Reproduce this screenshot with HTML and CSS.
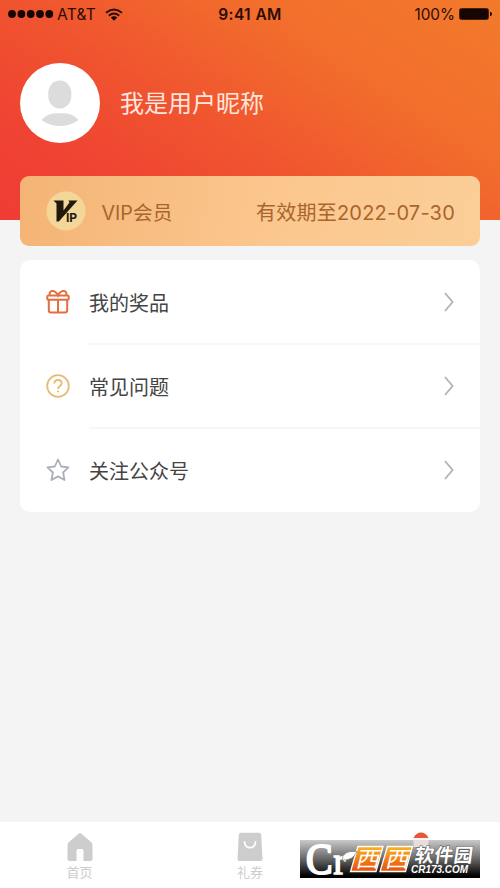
FILE: index.html
```html
<!DOCTYPE html>
<html lang="zh-CN">
<head>
<meta charset="utf-8">
<meta name="viewport" content="width=device-width, initial-scale=1">
<title>我的</title>
<link rel="stylesheet" href="styles.css">
</head>
<body>
<div class="screen">
  <header class="hero">
    <div class="status">
      <div class="status-left">
        <svg width="46" height="10" viewBox="0 0 46 10"><circle cx="4" cy="5" r="3.9"/><circle cx="13.4" cy="5" r="3.9"/><circle cx="22.7" cy="5" r="3.9"/><circle cx="32" cy="5" r="3.9"/><circle cx="41.3" cy="5" r="3.9"/></svg>
        <span class="carrier">AT&amp;T</span>
        <svg class="wifi" width="18" height="13" viewBox="0 0 18 13"><g fill="none" stroke="#2a0c05" stroke-width="2"><path d="M1 4.8Q9-1.8 17 4.8"/><path d="M3.8 7.7Q9 3.4 14.2 7.7"/></g><path d="M5.8 9.5Q9 6.9 12.2 9.5L9 12.7Z"/></svg>
      </div>
      <span class="time">9:41 AM</span>
      <div class="status-right">
        <span class="percent">100%</span>
        <svg width="33" height="12" viewBox="0 0 33 12"><rect x=".5" y=".5" width="29" height="11" rx="1.8" fill="none" stroke="#47200b"/><rect x="1" y="1" width="28" height="10" rx=".8"/><path d="M31 3.8q2 .4 2 2.2t-2 2.2z"/></svg>
      </div>
    </div>
    <div class="profile">
      <svg class="avatar" width="80" height="80" viewBox="0 0 80 80"><circle cx="40" cy="40" r="40" fill="#fff"/><rect x="28.3" y="17.5" width="23" height="28" rx="11" ry="12.5" fill="#dcdcdc"/><path d="M21.5 57Q27 50.5 36 50.2H44Q53 50.5 58.5 57Q50 63 40 63T21.5 57Z" fill="#dcdcdc"/></svg>
      <h1 class="nickname">我是用户昵称</h1>
    </div>
  </header>

  <main>
    <section class="vip">
      <svg class="vip-badge" width="40" height="40" viewBox="0 0 40 40"><circle cx="20" cy="20" r="19.5" fill="#f4d699"/><path d="M7.5 9.5H17.5V19.5L23.5 11.5 22.5 9.5H31.5L12.8 30.5H10.5V12.5Z" fill="#21190c"/><text class="vip-ip" x="20" y="30.8">IP</text></svg>
      <span class="vip-name">VIP会员</span>
      <span class="vip-date">有效期至2022-07-30</span>
    </section>

    <nav class="menu">
      <a class="item">
        <svg class="icon" width="24" height="24" viewBox="0 0 24 24" fill="none" stroke="#e36f3f" stroke-width="2"><rect x="1.3" y="5.5" width="21.4" height="4.2" rx="1"/><path d="M2.8 10V20.5Q2.8 22.5 5 22.5H19Q21.2 22.5 21.2 20.5V10M12 10V22.5M4 5.5C2 0 9-1 12 5.5C15-1 22 0 20 5.5"/></svg>
        <span class="label">我的奖品</span>
        <svg class="chevron" width="10" height="20" viewBox="0 0 10 20"><path d="M1 1L8.5 10 1 19"/></svg>
      </a>
      <a class="item">
        <svg class="icon" width="24" height="24" viewBox="0 0 24 24" fill="none" stroke="#e6bb76" stroke-width="1.8"><circle cx="12" cy="12" r="10.8"/><path d="M8.3 9.6C8.3 4.7 15.7 4.9 15.7 9.4C15.7 12 12 12 12 15"/><path d="M12 16.5v1.8"/></svg>
        <span class="label">常见问题</span>
        <svg class="chevron" width="10" height="20" viewBox="0 0 10 20"><path d="M1 1L8.5 10 1 19"/></svg>
      </a>
      <a class="item">
        <svg class="icon" width="24" height="24" viewBox="0 0 24 24" fill="none" stroke="#a9b0bd" stroke-width="1.8" stroke-linejoin="round"><path d="M12 1.5L15.2 8.5 22.5 9.3 17.1 14.5 18.5 22 12 18.4 5.5 22 6.9 14.5 1.5 9.3 8.8 8.5Z"/></svg>
        <span class="label">关注公众号</span>
        <svg class="chevron" width="10" height="20" viewBox="0 0 10 20"><path d="M1 1L8.5 10 1 19"/></svg>
      </a>
    </nav>
  </main>

  <footer class="tabs">
    <a class="tab">
      <svg width="26" height="30" viewBox="0 0 26 30"><path d="M11.5 1.7Q13 .5 14.5 1.7L24.5 10.5Q25.5 11.5 25.5 13V27Q25.5 29 23.5 29H16.5V19Q16.5 17 14.5 17H11.5Q9.5 17 9.5 19V29H2.5Q.5 29 .5 27V13Q.5 11.5 1.5 10.5Z" fill="#cdcdcd"/></svg>
      <span>首页</span>
    </a>
    <a class="tab">
      <svg width="26" height="30" viewBox="0 0 26 30"><path d="M4 .8H22Q24 .8 24.2 3L25.5 27Q25.5 29 23.5 29H2.5Q.5 29 .5 27L1.8 3Q2 .8 4 .8Z" fill="#cdcdcd"/><path d="M7.5 10C8 17.5 18 17.5 18.5 10" fill="none" stroke="#fff" stroke-width="1.8" stroke-linecap="round"/></svg>
      <span>礼券</span>
    </a>
    <a class="tab">
      <svg width="26" height="30" viewBox="0 0 26 30"><path d="M5.5 6Q8 .5 13 .5T20.5 6Z" fill="#e5583a"/><path d="M5.5 6H20.5V16H5.5Z" fill="#fbf3f1"/></svg>
    </a>
  </footer>

  <svg class="watermark" width="180" height="38" viewBox="0 0 180 38">
    <defs>
      <linearGradient id="bar" x1="0" y1="0" x2="0" y2="1"><stop offset="0" stop-color="#c9c9c9"/><stop offset=".5" stop-color="#666"/><stop offset=".95" stop-color="#000"/></linearGradient>
      <linearGradient id="orange" x1="0" y1="0" x2="0" y2="1"><stop offset="0" stop-color="#fbb31f"/><stop offset="1" stop-color="#e84e0c"/></linearGradient>
    </defs>
    <rect width="180" height="38" fill="url(#bar)"/>
    <rect x="113.5" width="15" height="7" fill="#e6dedc"/>
    <text class="mark-c" transform="translate(6 33.500) scale(.95 1.080)">C</text>
    <text class="mark-r" transform="translate(33.500 33.500) scale(1 1.050)">r</text>
    <g stroke="#fff" stroke-width="1.300" fill="url(#orange)"><path d="M58 6.500H83L76 31.500H50.500Z"/><path d="M87.500 6.500H112.500L105.500 31.500H80Z"/></g>
    <text class="mark-xi" transform="translate(55 26.500) skewX(-14) scale(1.100 1)">西</text>
    <text class="mark-xi" transform="translate(84.500 26.500) skewX(-14) scale(1.100 1)">西</text>
    <path d="M42 21Q42 10 57 11.500Q53 20.500 43 20Z" fill="#fff" stroke="#555" stroke-width=".5"/>
    <text class="mark-cn" transform="translate(114 21.500) skewX(-8)" textLength="58">软件园</text>
    <text class="mark-url" x="111" y="33" textLength="57" lengthAdjust="spacingAndGlyphs">CR173.COM</text>
  </svg>
</div>
</body>
</html>
```
FILE: styles.css
```css
* { box-sizing: border-box; }
body {
  margin: 0;
  background: #f4f4f4;
  font-family: Inter, "Noto Sans CJK SC", sans-serif;
}
svg { display: block; flex: none; }
.screen {
  position: relative;
  width: 500px;
  height: 888px;
  display: flex;
  flex-direction: column;
  overflow: hidden;
}
.hero {
  height: 220px;
  background: linear-gradient(33deg, #ef3d35 0%, #ef4133 16%, #f0542f 42%, #f26e2c 70%, #f27a2b 100%);
}
.status {
  height: 28px;
  padding: 0 8px;
  display: grid;
  grid-template-columns: 1fr auto 1fr;
  align-items: center;
  color: #2a0c05;
  font-size: 15.5px;
}
.status svg { fill: #160502; }
.status-left, .status-right { display: flex; align-items: center; }
.status-right { justify-content: flex-end; gap: 4px; }
.carrier { margin-left: 3px; letter-spacing: 0.3px; }
.wifi { margin-left: 9px; }
.time { font-weight: 600; letter-spacing: 0.4px; }
.percent { font-size: 15.3px; }
.profile {
  display: flex;
  align-items: center;
  gap: 20px;
  padding: 35px 20px 0;
}
.nickname {
  margin: 2px 0 0;
  color: #ffe5dd;
  font-size: 24px;
  font-weight: 400;
  line-height: 36px;
}
main { flex: 1; padding: 0 20px; }
.vip {
  height: 70px;
  margin-top: -44px;
  padding: 0 25px 0 26px;
  display: flex;
  align-items: center;
  border-radius: 9px;
  background: linear-gradient(100deg, #f4b475, #fbc78e 55%, #fbce98);
  color: #a9652c;
  font-size: 19.7px;
}
.vip-ip { font: 700 12px Inter, sans-serif; fill: #21190c; }
.vip-name { margin-left: 15.5px; }
.vip-date { margin-left: auto; font-size: 20px; letter-spacing: 0.22px; }
.menu {
  margin-top: 14px;
  height: 252px;
  background: #fff;
  border-radius: 10px;
}
.item {
  position: relative;
  height: 84px;
  padding: 0 26px;
  display: flex;
  align-items: center;
}
.item + .item::before {
  content: "";
  position: absolute;
  top: -1px;
  left: 69px;
  right: 0;
  height: 2px;
  background: #f7f7f7;
}
.label { margin-left: 19px; flex: 1; font-size: 20px; color: #444; }
.chevron { fill: none; stroke: #b5b5b5; stroke-width: 1.9; }
.tabs {
  height: 66px;
  padding: 10px 0 0;
  display: flex;
  justify-content: space-between;
  background: #fff;
}
.tab {
  width: 159px;
  display: flex;
  flex-direction: column;
  align-items: center;
  color: #cdcdcd;
  font-size: 13px;
  line-height: 21px;
}
.watermark { position: absolute; left: 300px; top: 840px; overflow: visible; }
.mark-c { font: 400 42px "Liberation Serif", serif; fill: #fff; stroke: #fff; stroke-width: 2px; }
.mark-r { font: 400 36px "Liberation Serif", serif; fill: #fff; stroke: #fff; stroke-width: 1.5px; }
.mark-xi { font: 400 22px "Noto Sans CJK SC", sans-serif; fill: #fff; }
.mark-cn { font: 700 19px "Noto Sans CJK SC", sans-serif; fill: #fff; stroke: #555; stroke-width: 1px; paint-order: stroke; }
.mark-url { font: italic 700 10px "Liberation Sans", sans-serif; fill: #fff; }
```
